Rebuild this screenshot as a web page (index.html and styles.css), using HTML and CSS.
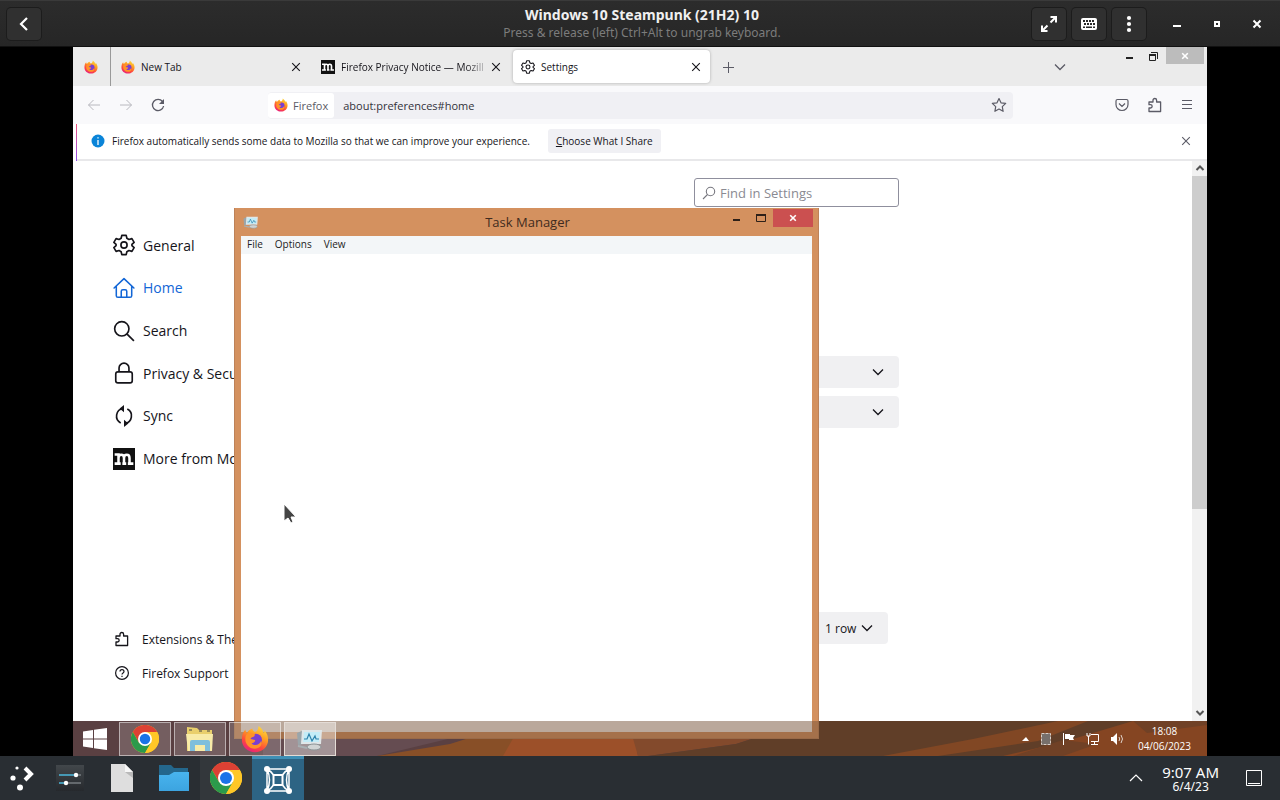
FILE: index.html
```html
<!DOCTYPE html>
<html lang="en">
<head>
    <meta charset="UTF-8">
    <meta name="viewport" content="width=device-width, initial-scale=1.0">
    <title>Windows 10 Steampunk (21H2) 10</title>
    <link rel="stylesheet" href="styles.css">
</head>
<body>
    <!-- shared icons -->
    <svg class="defs" width="0" height="0" aria-hidden="true">
        <defs>
            <linearGradient id="flame" x1="0.8" y1="0" x2="0.3" y2="1">
                <stop offset="0" stop-color="#ffe040"/>
                <stop offset="0.4" stop-color="#ff9a22"/>
                <stop offset="0.7" stop-color="#ff4a3c"/>
                <stop offset="1" stop-color="#e8207c"/>
            </linearGradient>
            <linearGradient id="folder" x1="0" y1="0" x2="0" y2="1">
                <stop offset="0" stop-color="#48b4ee"/>
                <stop offset="1" stop-color="#3ca4e0"/>
            </linearGradient>
            <linearGradient id="slate" x1="0" y1="0" x2="0" y2="1">
                <stop offset="0" stop-color="#42474b"/>
                <stop offset="1" stop-color="#26292d"/>
            </linearGradient>
        </defs>
        <symbol id="firefox" viewBox="0 0 32 32">
            <path fill="url(#flame)" d="M20 1c4 3 5 5 6 8 1-1 1-2 1-3 3 4 4 7 4 11 0 8-7 14-15 14S1 25 1 17c0-5 1-9 4-12 0 2 1 3 2 4 1-3 4-4 6-5 0 2 1 3 3 4 3-1 4-4 4-7z"/>
            <circle cx="17" cy="17" r="7" fill="#7a3fd0"/>
            <path fill="#ff9228" d="M7 10c3-2 7-1 9 1l-1 2c-2 1-4 1-4 3 2 0 3 1 5 1 1 2-2 4-4 4 4 4 10 1 11-3 2 6-3 9-7 9C9 27 5 21 5 17c0-3 0-5 2-7z"/>
        </symbol>
        <symbol id="chrome" viewBox="0 0 32 32">
            <circle cx="16" cy="16" r="16" fill="#ffc727"/>
            <path fill="#dc4134" d="M2.1 8A16 16 0 0 1 29.9 8H16L9 20z"/>
            <path fill="#2b9a4b" d="M2.1 8A16 16 0 0 0 16 32l7-12H9z"/>
            <path fill="#ffc727" d="M29.9 8A16 16 0 0 1 16 32l7-12c3-4 0-10-3-12z"/>
            <circle cx="16" cy="16" r="8" fill="#fff"/>
            <circle cx="16" cy="16" r="6" fill="#1a73e8"/>
        </symbol>
        <symbol id="mozilla" viewBox="0 0 20 20">
            <path fill="#111" d="M0 0h20v20H0z"/>
            <path fill="none" stroke="#fff" stroke-width="2.300" d="M1.500 6h3.500v8M1.500 14.200h5.500M5 9c0-3.800 5-3.800 5 0v5.200M8.500 14.200h3.500M10 9c0-3.800 5-3.800 5 0v5.200M13.500 14.200h5"/>
        </symbol>
        <symbol id="gear" viewBox="0 0 20 20">
            <g fill="none" stroke="currentColor" stroke-width="1.500" stroke-linejoin="round">
                <path d="M8 1.200h4l.6 2.700 1.900 1.100 2.700-.8 2 3.400-2 1.900v1l2 1.900-2 3.400-2.700-.8-1.900 1.100-.6 2.700H8l-.6-2.700L5.500 15l-2.700.8-2-3.400 2-1.900v-1l-2-1.900 2-3.400 2.700.8 1.900-1.100z"/>
                <circle cx="10" cy="10" r="2.800"/>
            </g>
        </symbol>
        <symbol id="puzzle" viewBox="0 0 16 16">
            <path fill="none" stroke="currentColor" stroke-width="1.300" stroke-linejoin="round" d="M2 5h4V3.300a1.800 1.800 0 0 1 3.600 0V5h4v9.500H2V11h1.500a1.600 1.600 0 0 0 0-3.300H2z"/>
        </symbol>
        <symbol id="close" viewBox="0 0 10 10">
            <path fill="none" stroke="currentColor" stroke-width="1.100" d="M1.200 1.200l7.600 7.600M8.800 1.200L1.200 8.800"/>
        </symbol>
        <symbol id="close-bold" viewBox="0 0 10 10">
            <path fill="none" stroke="currentColor" stroke-width="2" d="M1.500 1.500l7 7M8.500 1.500l-7 7"/>
        </symbol>
        <symbol id="chevron" viewBox="0 0 12 12">
            <path fill="none" stroke="currentColor" stroke-width="1.300" d="M1 3.500l5 5 5-5"/>
        </symbol>
        <symbol id="monitor" viewBox="0 0 28 24">
            <path fill="#9aa5aa" d="M1 6l7-3v14l-6 1z"/>
            <path fill="#dfe6e8" d="M6 3h20l-1 14H5z"/>
            <path fill="#c3ecf7" d="M8 5h16l-1 10H7z"/>
            <path fill="none" stroke="#2c82ac" stroke-width="1.200" d="M8 12h3l2-5 3 7 3-5 1 3h3"/>
            <ellipse cx="18" cy="20" rx="7" ry="3" fill="#d0d4d4" stroke="#8d9698"/>
            <path stroke="#a8b0b3" stroke-width="2" d="M2 19l9 2"/>
        </symbol>
    </svg>

    <header class="viewer-bar">
        <div class="viewer-left">
            <button class="viewer-button" aria-label="Back">
                <svg width="16" height="16" viewBox="0 0 16 16"><path fill="none" stroke="#fff" stroke-width="2.200" d="M11 2L5 8l6 6"/></svg>
            </button>
        </div>
        <div class="viewer-title">
            <h1>Windows 10 Steampunk (21H2) 10</h1>
            <p>Press &amp; release (left) Ctrl+Alt to ungrab keyboard.</p>
        </div>
        <div class="viewer-right">
            <button class="viewer-button" aria-label="Fullscreen">
                <svg width="18" height="18" viewBox="0 0 18 18"><path fill="none" stroke="#fff" stroke-width="2" d="M10.500 2H16v5.500M16 2l-5.500 5.500M2 10.500V16h5.500M2 16l5.500-5.500"/></svg>
            </button>
            <button class="viewer-button" aria-label="Keyboard">
                <svg width="18" height="14" viewBox="0 0 18 14"><rect x="1" y="1" width="16" height="12" rx="2" fill="#fff"/><path stroke="#2a2a2a" stroke-width="2" stroke-dasharray="2 1" d="M3 4h12M4 7h11"/><path stroke="#2a2a2a" stroke-width="1.500" d="M3 10.300h2M6 10.300h6M13 10.300h2"/></svg>
            </button>
            <button class="viewer-button" aria-label="Menu">
                <svg width="6" height="18" viewBox="0 0 6 18" fill="#fff"><circle cx="3" cy="3" r="2.100"/><circle cx="3" cy="9" r="2.100"/><circle cx="3" cy="15" r="2.100"/></svg>
            </button>
            <div class="viewer-controls">
                <button aria-label="Minimize"><svg width="10" height="10"><path fill="#fff" d="M1 6h8v2H1z"/></svg></button>
                <button aria-label="Maximize"><svg width="10" height="10"><path fill="none" stroke="#fff" stroke-width="2" d="M3 3h4v4H3z"/></svg></button>
                <button aria-label="Close"><svg width="10" height="10" color="#fff"><use href="#close-bold"/></svg></button>
            </div>
        </div>
    </header>

    <main class="screen">
        <div class="desktop">
            <section class="firefox">
                <div class="tab-strip">
                    <button class="pinned-tab" aria-label="Pinned tab"><svg width="14" height="14"><use href="#firefox"/></svg></button>
                    <div class="tab">
                        <svg width="14" height="14"><use href="#firefox"/></svg>
                        <span class="tab-label">New Tab</span>
                        <button aria-label="Close tab"><svg width="10" height="10"><use href="#close"/></svg></button>
                    </div>
                    <div class="tab">
                        <svg width="14" height="14"><use href="#mozilla"/></svg>
                        <span class="tab-label faded">Firefox Privacy Notice — Mozill</span>
                        <button aria-label="Close tab"><svg width="10" height="10"><use href="#close"/></svg></button>
                    </div>
                    <div class="tab active">
                        <svg width="14" height="14"><use href="#gear"/></svg>
                        <span class="tab-label">Settings</span>
                        <button aria-label="Close tab"><svg width="10" height="10"><use href="#close"/></svg></button>
                    </div>
                    <button class="new-tab" aria-label="New tab"><svg width="12" height="12"><path stroke="#5b5b66" d="M6.500 1v11M1 6.500h11"/></svg></button>
                    <button class="list-tabs" aria-label="List all tabs"><svg width="12" height="12"><use href="#chevron"/></svg></button>
                    <div class="window-controls">
                        <button aria-label="Minimize"><svg width="10" height="10"><path fill="#222" d="M1 6h7v2H1z"/></svg></button>
                        <button aria-label="Restore"><svg width="10" height="10"><path fill="none" stroke="#222" d="M1.500 3.500h6v6h-6zM3 1.500h6.500V8"/><path fill="#222" d="M1 3h7v2H1z"/></svg></button>
                        <button class="window-close" aria-label="Close"><svg width="8" height="8"><use href="#close-bold"/></svg></button>
                    </div>
                </div>

                <div class="nav-bar">
                    <div class="nav-buttons">
                        <button class="dim" aria-label="Back"><svg width="14" height="14"><path fill="none" stroke="currentColor" d="M13 7H1.500M6.500 2l-5 5 5 5"/></svg></button>
                        <button class="dim" aria-label="Forward"><svg width="14" height="14"><path fill="none" stroke="currentColor" d="M1 7h11.500M7.500 2l5 5-5 5"/></svg></button>
                        <button aria-label="Reload"><svg width="14" height="14"><path fill="none" stroke="currentColor" stroke-width="1.300" d="M11.500 3.500A5.600 5.600 0 1 0 12.600 8"/><path fill="currentColor" d="M13 1v5H8z"/></svg></button>
                    </div>
                    <div class="url-bar">
                        <span class="identity"><svg width="14" height="14"><use href="#firefox"/></svg>Firefox</span>
                        <input type="text" value="about:preferences#home" aria-label="Address">
                        <button aria-label="Bookmark"><svg width="16" height="16"><path fill="none" stroke="currentColor" stroke-width="1.200" stroke-linejoin="round" d="M8 1.500l2 4.300 4.700.6-3.400 3.200.8 4.700L8 12l-4.100 2.300.8-4.700L1.300 6.400 6 5.800z"/></svg></button>
                    </div>
                    <div class="nav-tools">
                        <button aria-label="Pocket"><svg width="14" height="14"><path fill="none" stroke="currentColor" stroke-width="1.200" d="M1 3q0-1.500 1.500-1.500h9Q13 1.500 13 3v3.500a6 6 0 0 1-12 0zM4 5.500l3 3 3-3"/></svg></button>
                        <button aria-label="Extensions"><svg width="16" height="16"><use href="#puzzle"/></svg></button>
                        <button aria-label="Application menu"><svg width="12" height="12"><path stroke="currentColor" d="M1 1.500h10M1 5.500h10M1 9.500h10"/></svg></button>
                    </div>
                </div>

                <div class="notice">
                    <svg width="14" height="14"><circle cx="7" cy="7" r="6.500" fill="#0a84d8"/><path stroke="#fff" stroke-width="1.300" d="M7 6v5M7 3.300v1.300"/></svg>
                    <span>Firefox automatically sends some data to Mozilla so that we can improve your experience.</span>
                    <button class="share-button"><u>C</u>hoose What I Share</button>
                    <button class="notice-close" aria-label="Dismiss"><svg width="10" height="10"><use href="#close"/></svg></button>
                </div>

                <div class="page">
                    <nav class="sidebar">
                        <div class="categories">
                            <a href="#general"><svg width="22" height="22"><use href="#gear"/></svg>General</a>
                            <a href="#home" class="current"><svg width="22" height="22" viewBox="0 0 20 20"><path fill="none" stroke="currentColor" stroke-width="1.400" stroke-linejoin="round" stroke-linecap="round" d="M1 10l9-8.500L19 10M3 8.500V17q0 1.500 1.500 1.500h11q1.500 0 1.500-1.500V8.500M7.500 18.500V13q0-1.500 1.500-1.500h2q1.500 0 1.500 1.500v5.500"/></svg>Home</a>
                            <a href="#search"><svg width="22" height="22" viewBox="0 0 20 20"><g fill="none" stroke="currentColor" stroke-width="1.500"><circle cx="8" cy="8" r="6.500"/><path d="M12.800 12.800L19 19"/></g></svg>Search</a>
                            <a href="#privacy"><svg width="22" height="22" viewBox="0 0 20 20"><g fill="none" stroke="currentColor" stroke-width="1.500"><rect x="2.500" y="9" width="15" height="10" rx="2"/><path d="M5.500 9V5.500a4.500 4.500 0 0 1 9 0V9"/></g></svg>Privacy &amp; Security</a>
                            <a href="#sync"><svg width="22" height="22" viewBox="0 0 20 20"><path fill="none" stroke="currentColor" stroke-width="1.500" d="M7 16.300A7 7 0 0 1 9 3.200M13 3.700a7 7 0 0 1-2 13.100"/><path fill="currentColor" d="M10 0v6.500L6 3.200zM10 13.500V20l4-3.200z"/></svg>Sync</a>
                            <a href="#more"><svg width="22" height="22"><use href="#mozilla"/></svg>More from Mozilla</a>
                        </div>
                        <div class="support">
                            <a href="#addons"><svg width="16" height="16"><use href="#puzzle"/></svg>Extensions &amp; Themes</a>
                            <a href="#support"><svg width="16" height="16"><g fill="none" stroke="currentColor" stroke-width="1.200"><circle cx="8" cy="8" r="6.400"/><path d="M6 6.500c0-2.600 4-2.600 4 0C10 8 8 7.800 8 9.500M8 10.700V12"/></g></svg>Firefox Support</a>
                        </div>
                    </nav>
                    <div class="preferences">
                        <label class="find">
                            <svg width="14" height="14"><g fill="none" stroke="#77777f" stroke-width="1.100"><circle cx="8.500" cy="5.500" r="4.200"/><path d="M5.500 8.500L1 13"/></g></svg>
                            <input type="text" placeholder="Find in Settings" aria-label="Find in Settings">
                        </label>
                        <div class="home-options">
                            <div class="picker"><select aria-label="Homepage and new windows"><option></option></select><svg width="12" height="12"><use href="#chevron"/></svg></div>
                            <div class="picker"><select aria-label="New tabs"><option></option></select><svg width="12" height="12"><use href="#chevron"/></svg></div>
                        </div>
                        <div class="picker rows"><select aria-label="Shortcut rows"><option>1 row</option></select><svg width="12" height="12"><use href="#chevron"/></svg></div>
                    </div>
                    <div class="scrollbar">
                        <svg width="10" height="10" viewBox="0 0 10 10"><path fill="none" stroke="#555" stroke-width="2" d="M1.500 7L5 3.500 8.500 7"/></svg>
                        <div class="thumb"></div>
                        <svg width="10" height="10" viewBox="0 0 10 10"><path fill="none" stroke="#555" stroke-width="2" d="M1.500 3L5 6.500 8.500 3"/></svg>
                    </div>
                </div>
            </section>

            <svg class="wallpaper" viewBox="0 0 1134 35" preserveAspectRatio="none" aria-hidden="true">
                <path fill="#3e2e4c" d="M0 0h1134v35H0z"/>
                <path fill="#54466a" d="M190 0h260L304 35H190z"/>
                <path fill="#9a4c16" d="M304 35l73-12L450 0h110v35z"/>
                <path fill="#c24e1a" d="M430 35l20-35h110l5 35z"/>
                <path fill="#904220" d="M565 35l-10-35h180l-72 23-88 12z"/>
                <path fill="#4a2a18" d="M575 35l88-12L735 0h399v35z"/>
                <path fill="#8c3c10" d="M810 35l90-17L985 0h30l-50 20-100 15z"/>
                <path fill="#94380c" d="M930 35l60-14 70-21h74v35z"/>
                <path fill="#6a3014" d="M940 35l50-16 34 4-34 12zM1060 0h74v4l-60 8z"/>
            </svg>

            <section class="task-manager">
                <div class="tm-title">
                    <svg width="16" height="14"><use href="#monitor"/></svg>
                    <h2>Task Manager</h2>
                    <div class="tm-controls">
                        <button aria-label="Minimize"><svg width="10" height="10"><path fill="#2e2018" d="M1 6h7v2H1z"/></svg></button>
                        <button aria-label="Maximize"><svg width="10" height="10"><path fill="none" stroke="#2e2018" d="M.5 1.500h9v7h-9z"/><path fill="#2e2018" d="M0 1h10v2H0z"/></svg></button>
                        <button class="tm-close" aria-label="Close"><svg width="8" height="8"><use href="#close-bold"/></svg></button>
                    </div>
                </div>
                <div class="tm-menu">
                    <button>File</button>
                    <button>Options</button>
                    <button>View</button>
                </div>
                <div class="tm-body"></div>
            </section>

            <footer class="guest-taskbar">
                <button class="start" aria-label="Start"><svg width="24" height="22" viewBox="0 0 24 22" fill="#fff"><path d="M0 3.500L10 2v8.500H0zM11 1.800L24 0v10.500H11zM0 11.500h10V20L0 18.500zM11 11.500h13V22l-13-1.800z"/></svg></button>
                <div class="guest-tasks">
                    <button aria-label="Chrome"><svg width="28" height="28"><use href="#chrome"/></svg></button>
                    <button aria-label="File Explorer"><svg width="30" height="28" viewBox="0 0 30 28"><path fill="#e9cf6c" d="M2 2l10 1 2 2h13v21H2z"/><path fill="#f8eba8" d="M1 9h27l-1 17H3z"/><path fill="#7fbfdd" d="M5 26v-9q0-2 2-2h16q2 0 2 2v9h-5v-6H10v6z"/><path stroke="#444" d="M4 5h3M14 6h3M22 6h3"/></svg></button>
                    <button aria-label="Firefox"><svg width="28" height="28"><use href="#firefox"/></svg></button>
                    <button class="focused" aria-label="Task Manager"><svg width="28" height="24"><use href="#monitor"/></svg></button>
                </div>
                <div class="guest-tray">
                    <svg width="8" height="8"><path fill="#fff" d="M0 6l4-4 3 4z"/></svg>
                    <svg width="12" height="12"><path fill="#77706c" stroke="#d8cfc8" stroke-dasharray="3 1" d="M1.500.5h9v11h-9z"/></svg>
                    <svg width="14" height="14" fill="#fff"><path d="M1 1h1v12H1zM3 2h5v1h5l-2 3 1 2H7V7H3z"/></svg>
                    <svg width="14" height="14" fill="none" stroke="#fff"><path d="M5 2.500h7.500v7H5M8.500 10v3M5 12.500h7M1 1v3h3V1M2.500 4v8.500"/></svg>
                    <svg width="14" height="14"><path fill="#fff" d="M1 5h2l4-4v12L3 9H1z"/><path fill="none" stroke="#e0d4cc" d="M9 5q1.500 2 0 4M11 3q3 4 0 8"/></svg>
                </div>
                <div class="guest-clock"><span>18:08</span><span>04/06/2023</span></div>
            </footer>

            <svg class="pointer" width="14" height="22" viewBox="0 0 14 22"><path fill="#444" stroke="#fff" d="M1 1v17l4-3 3 5 2-1-2-5h5z"/></svg>
        </div>
    </main>

    <footer class="host-panel">
        <button class="launcher" aria-label="Applications"><svg width="26" height="26" viewBox="0 0 26 26"><g fill="#fff"><circle cx="8" cy="3" r="1.600"/><circle cx="4" cy="13" r="2.600"/><circle cx="11" cy="22.500" r="3"/></g><path fill="none" stroke="#fff" stroke-width="4" d="M16 3l6 6-6 6"/></svg></button>
        <div class="host-tasks">
            <button aria-label="System Settings"><svg width="28" height="26" viewBox="0 0 28 26"><path fill="url(#slate)" d="M0 0h28v26H0z"/><path stroke="#4cb8dc" stroke-width="1.500" d="M3 10h17M3 18h7"/><path stroke="#777c80" stroke-width="1.500" d="M20 10h5M10 18h15"/><circle cx="20" cy="10" r="2.200" fill="#fff"/><circle cx="10" cy="18" r="2.200" fill="#fff"/></svg></button>
            <button aria-label="Text Editor"><svg width="22" height="28" viewBox="0 0 22 28"><path fill="#dedede" d="M0 0h14l8 8v20H0z"/><path fill="#f6f6f6" d="M14 0l8 8h-8z"/><path fill="#b9b9b9" d="M14 8h8v6z"/></svg></button>
            <button aria-label="Files"><svg width="32" height="26" viewBox="0 0 32 26"><path fill="#24678c" d="M1 0h12l3 3h14v12H1z"/><path fill="url(#folder)" d="M1 10h10l5-3h15v19H1z"/></svg></button>
            <button class="running" aria-label="Google Chrome"><svg width="32" height="32"><use href="#chrome"/></svg></button>
            <button class="selected" aria-label="Boxes"><svg width="28" height="28" viewBox="0 0 28 28"><g fill="none" stroke="#fff" stroke-width="1.500"><path d="M3 3h22v22H3zM3 3q4 2 7 6.500M25 3q-4 2-7 6.500M3 25q4-2 7-6.500M25 25q-4-2-7-6.500M3 3q5 11 0 22M25 3q-5 11 0 22"/><path stroke-width="2" d="M9.500 9h9v10h-9z"/></g><g fill="#fff"><circle cx="3" cy="3" r="3"/><circle cx="25" cy="3" r="3"/><circle cx="3" cy="25" r="3"/><circle cx="25" cy="25" r="3"/></g></svg></button>
        </div>
        <div class="host-tray">
            <button aria-label="Show hidden icons"><svg width="14" height="8"><path fill="none" stroke="#fff" stroke-width="1.200" d="M1 7l6-6 6 6"/></svg></button>
            <div class="host-clock"><span class="time">9:07 AM</span><span class="date">6/4/23</span></div>
            <button aria-label="Show desktop"><svg width="16" height="16"><path fill="none" stroke="#fff" d="M.5.5h15v15H.5zM2 13.500h12"/></svg></button>
        </div>
    </footer>
</body>
</html>
```
FILE: styles.css
```css
* {
    box-sizing: border-box;
}
body {
    margin: 0;
    height: 100vh;
    display: flex;
    flex-direction: column;
    background: #000;
    font-family: "Open Sans", "Noto Sans", sans-serif;
    overflow: hidden;
}
h1, h2, p {
    margin: 0;
}
button {
    display: flex;
    align-items: center;
    justify-content: center;
    padding: 0;
    border: none;
    background: none;
    color: inherit;
    font: inherit;
}
a {
    color: inherit;
    text-decoration: none;
}
svg {
    flex: none;
}
.defs {
    position: absolute;
}

/* viewer header */
.viewer-bar {
    flex: none;
    height: 47px;
    display: grid;
    grid-template-columns: 1fr auto 1fr;
    align-items: center;
    padding: 0 3px 0 7px;
    background: linear-gradient(#2c2c2c, #262626);
    border-top: 1px solid #3a3a3a;
    border-bottom: 1px solid #111;
    font-family: "Noto Sans", sans-serif;
}
.viewer-title {
    text-align: center;
}
.viewer-title h1 {
    font-size: 14px;
    line-height: 18px;
    color: #f0f0f0;
}
.viewer-title p {
    font-size: 12px;
    line-height: 17px;
    color: #7c7c7c;
}
.viewer-button {
    width: 34px;
    height: 32px;
    border-radius: 4px;
    background: #303030;
    box-shadow: 0 0 0 1px #1c1c1c;
}
.viewer-right {
    display: flex;
    justify-content: flex-end;
    gap: 6px;
}
.viewer-controls {
    display: flex;
    margin-left: 5px;
}
.viewer-controls button {
    width: 40px;
}

/* guest screen */
.screen {
    flex: 1;
    min-height: 0;
    display: flex;
    padding: 0 73px;
}
.desktop {
    position: relative;
    flex: 1;
    display: flex;
    flex-direction: column;
    overflow: hidden;
}
.firefox {
    flex: 1;
    min-height: 0;
    display: flex;
    flex-direction: column;
    background: #fff;
    color: #15141a;
}

.tab-strip {
    flex: none;
    height: 39px;
    display: flex;
    align-items: center;
    background: #ebebeb;
    font-size: 10px;
}
.pinned-tab {
    width: 38px;
    height: 100%;
    padding-right: 2px;
    border-right: 1px solid #999;
}
.tab {
    width: 200px;
    height: 33px;
    display: flex;
    align-items: center;
    padding: 0 10px;
}
.tab.active {
    width: 197px;
    margin-left: 2px;
    padding: 0 9px 0 8px;
    background: #fff;
    border-radius: 4px;
    box-shadow: 0 0 3px #aaa;
}
.tab-label {
    flex: 1;
    min-width: 0;
    margin: 0 3px 0 6px;
    white-space: nowrap;
}
.tab-label.faded {
    mask-image: linear-gradient(to right, #000 85%, rgba(0, 0, 0, 0.1));
}
.new-tab {
    width: 36px;
}
.list-tabs {
    margin-left: auto;
    color: #5b5b66;
}
.window-controls {
    align-self: flex-start;
    display: flex;
    margin: 0 3px 0 52px;
}
.window-controls button {
    width: 23px;
    height: 17px;
}
.window-controls .window-close {
    width: 38px;
    margin-left: 2px;
    background: #bcbcbc;
    color: #fff;
}

.nav-bar {
    flex: none;
    height: 38px;
    display: flex;
    align-items: center;
    padding: 0 14px;
    background: #f9f9fb;
    color: #5b5b66;
}
.nav-buttons {
    display: flex;
    gap: 18px;
}
.nav-buttons .dim {
    color: #b8b8be;
}
.url-bar {
    flex: 1;
    height: 27px;
    display: flex;
    align-items: center;
    margin: 0 102px 0 103px;
    padding-right: 6px;
    border-radius: 4px;
    background: #f0f0f4;
    font-size: 11px;
}
.identity {
    height: 25px;
    display: flex;
    align-items: center;
    gap: 5px;
    padding: 0 6px;
    background: #fff;
    border-radius: 3px;
}
.url-bar input {
    flex: 1;
    padding: 0 9px;
    border: none;
    background: none;
    color: #33323a;
    font: inherit;
}
.nav-tools {
    display: flex;
    align-items: center;
    gap: 18px;
}

.notice {
    flex: none;
    height: 37px;
    display: flex;
    align-items: center;
    padding: 0 16px 4px 14px;
    border-left: 4px solid #fff;
    border-image: linear-gradient(to right, #fff 75%, #c05aba 75%) 1;
    border-image: linear-gradient(#f0567a, #9050f0) 1;
    border-width: 0 0 0 1px;
    margin-left: 3px;
    background: #fff;
    box-shadow: inset 0 -2px #e8e8ea;
    font-size: 10px;
}
.notice > span {
    margin: 0 18px 0 7px;
}
.share-button {
    height: 24px;
    padding: 0 8px;
    border-radius: 3px;
    background: #f0f0f4;
}
.notice-close {
    margin-left: auto;
    color: #5b5b66;
}

/* settings page */
.page {
    flex: 1;
    min-height: 0;
    display: flex;
}
.sidebar {
    width: 240px;
    display: flex;
    flex-direction: column;
    justify-content: space-between;
    padding: 63px 0 31px 40px;
    white-space: nowrap;
}
.categories {
    height: 256px;
    display: grid;
    grid-template-rows: repeat(6, 1fr);
    font-size: 14px;
}
.categories a {
    display: flex;
    align-items: center;
    gap: 8px;
}
.categories .current {
    color: #1266d6;
}
.support {
    font-size: 12px;
}
.support a {
    height: 34px;
    display: flex;
    align-items: center;
    gap: 12px;
    padding-left: 1px;
}
.preferences {
    flex: 0 1 586px;
    display: flex;
    flex-direction: column;
    align-items: flex-end;
    padding-top: 17px;
}
.find {
    width: 205px;
    height: 29px;
    display: flex;
    align-items: center;
    gap: 4px;
    padding: 0 7px;
    border: 1px solid #8f8f9d;
    border-radius: 3px;
}
.find input {
    width: 100%;
    padding: 0;
    border: none;
    font: inherit;
    font-size: 13px;
}
.find input::placeholder {
    color: #8a8a92;
}
.home-options {
    display: grid;
    gap: 8px;
    margin: 149px 0 184px;
}
.picker {
    width: 260px;
    display: grid;
    align-items: center;
}
.picker select,
.picker svg {
    grid-area: 1 / 1;
}
.picker select {
    height: 32px;
    padding: 0 17px;
    border: none;
    border-radius: 4px;
    background: #f0f0f2;
    color: inherit;
    appearance: none;
    font: 500 12px "Open Sans", sans-serif;
}
.picker svg {
    justify-self: end;
    margin-right: 15px;
}
.picker.rows {
    width: 80px;
    margin-right: 11px;
}
.scrollbar {
    width: 15px;
    display: flex;
    flex-direction: column;
    align-items: center;
    gap: 3px;
    margin-left: auto;
    padding: 2px 0 3px;
    background: #f1f1f1;
}
.scrollbar .thumb {
    width: 100%;
    height: 60%;
    margin-bottom: auto;
    background: #cdcdcd;
}

/* task manager window */
.task-manager {
    position: absolute;
    left: 161px;
    top: 161px;
    width: 585px;
    height: 531px;
    display: flex;
    flex-direction: column;
    padding: 0 6px 6px;
    border: 1px solid #bd8259;
    border-top: none;
    background: #d4915f;
}
.tm-title {
    height: 28px;
    display: grid;
    grid-template-columns: 1fr auto 1fr;
    align-items: center;
    padding-left: 2px;
    color: #402b20;
}
.tm-title h2 {
    font-size: 13px;
    font-weight: 400;
}
.tm-controls {
    align-self: start;
    justify-self: end;
    display: flex;
    margin: 1px -1px 0 0;
}
.tm-controls button {
    width: 24px;
    height: 18px;
}
.tm-controls .tm-close {
    width: 40px;
    background: #cb5050;
    color: #fff;
}
.tm-menu {
    height: 18px;
    display: flex;
    gap: 12px;
    padding: 0 6px 2px;
    background: #f3f6f8;
    color: #1c1c1c;
    font-size: 10px;
}
.tm-body {
    flex: 1;
    background: #fff;
}

/* guest taskbar, glass over the wallpaper and the window */
.wallpaper {
    width: 100%;
    height: 35px;
}
.guest-taskbar {
    position: absolute;
    left: 0;
    right: 0;
    bottom: 0;
    height: 35px;
    display: flex;
    align-items: center;
    background: rgba(118, 82, 56, 0.5);
    color: #fff;
}
.start {
    width: 46px;
    height: 100%;
    padding-right: 2px;
}
.guest-tasks {
    display: flex;
    gap: 3px;
}
.guest-tasks button {
    width: 52px;
    height: 34px;
    border: 1px solid rgba(255, 255, 255, 0.5);
    background: rgba(255, 255, 255, 0.16);
}
.guest-tasks .focused {
    border-color: #e4dcd6;
    background: rgba(255, 255, 255, 0.4);
}
.guest-tray {
    display: flex;
    align-items: center;
    gap: 10px;
    margin-left: auto;
}
.guest-clock {
    display: flex;
    flex-direction: column;
    align-items: center;
    margin: 0 16px 0 14px;
    font-size: 10px;
    line-height: 15px;
}
.pointer {
    position: absolute;
    left: 210px;
    top: 456px;
}

/* host panel */
.host-panel {
    flex: none;
    height: 44px;
    display: flex;
    background: #292e33;
    color: #fcfcfc;
    font-family: "Noto Sans", sans-serif;
}
.launcher {
    width: 44px;
}
.host-tasks {
    display: flex;
}
.host-tasks button {
    width: 52px;
}
.host-tasks .running {
    background: #33373b;
}
.host-tasks .selected {
    border-top: 3px solid #3f8fb5;
    background: #2d6484;
}
.host-tray {
    display: flex;
    align-items: center;
    margin-left: auto;
    padding-right: 18px;
}
.host-clock {
    display: flex;
    flex-direction: column;
    align-items: center;
    margin: 0 27px 0 19px;
}
.host-clock .time {
    font-size: 15px;
    line-height: 16px;
}
.host-clock .date {
    font-size: 12px;
    line-height: 13px;
}
```
